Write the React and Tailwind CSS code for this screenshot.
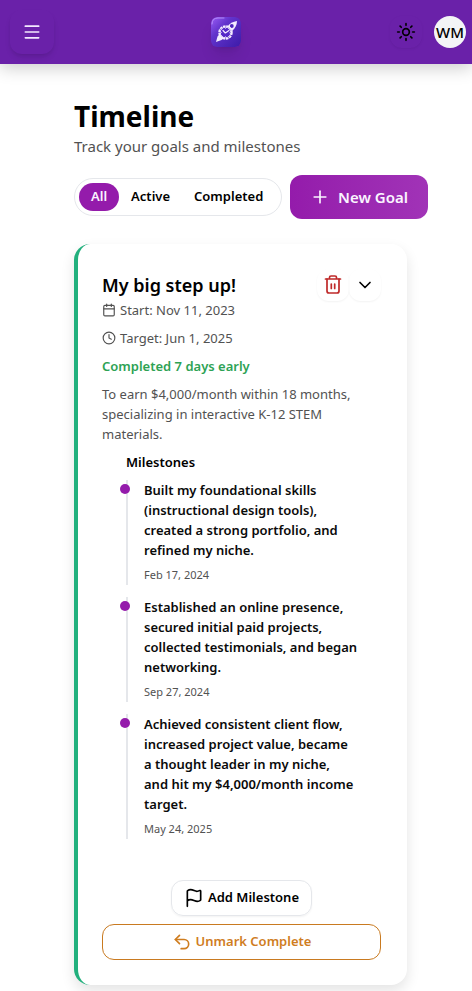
import { useState } from "react";
import { Calendar, ChevronDown, Clock, Flag, Menu, Plus, Sun, Undo2 } from "lucide-react";

const FILTERS = ["All", "Active", "Completed"];

const GOAL = {
  title: "My big step up!",
  start: "Nov 11, 2023",
  target: "Jun 1, 2025",
  status: "Completed 7 days early",
  description: "To earn $4,000/month within 18 months, specializing in interactive K-12 STEM materials.",
  milestones: [
    {
      text: "Built my foundational skills (instructional design tools), created a strong portfolio, and refined my niche.",
      date: "Feb 17, 2024",
    },
    {
      text: "Established an online presence, secured initial paid projects, collected testimonials, and began networking.",
      date: "Sep 27, 2024",
    },
    {
      text: "Achieved consistent client flow, increased project value, became a\u00a0thought leader in my niche, and\u00a0hit my $4,000/month income target.",
      date: "May 24, 2025",
    },
  ],
};

function Logo() {
  return (
    <svg viewBox="0 0 30 30" className="size-[30px] rounded-md shadow-lg" aria-hidden="true">
      <defs>
        <linearGradient id="logo-bg" x1="0" y1="0" x2="1" y2="1">
          <stop offset="0" stopColor="#9a5cf5" />
          <stop offset="0.35" stopColor="#6233cc" />
          <stop offset="1" stopColor="#3c1ba8" />
        </linearGradient>
      </defs>
      <rect width="30" height="30" rx="6" fill="url(#logo-bg)" />
      <path d="M1 7Q1 1 7 1H13" fill="none" stroke="#c9a5ff" strokeWidth="1" strokeLinecap="round" opacity="0.7" />
      <path d="M26 4C22 4.500 18.500 6.500 16.500 9.500L21 14C24 11.500 26 8 26 4Z" fill="#f3ecff" />
      <path d="M9.500 16L6.500 19.500L5 25L10.500 23L14 20.500Z" fill="#f3ecff" />
      <circle cx="20.800" cy="9" r="1.900" fill="#4b24bd" />
      <circle cx="14.500" cy="15.500" r="6.400" fill="none" stroke="#f3ecff" strokeWidth="1.700" strokeDasharray="2.600 0.750" />
      <circle cx="14.500" cy="15.500" r="5.300" fill="#5529c8" stroke="#f3ecff" strokeWidth="1" />
      <path d="M12 13.500L14.300 16L18 13.500" fill="none" stroke="#f3ecff" strokeWidth="1.200" strokeLinecap="round" strokeLinejoin="round" />
      <path d="M14.500 11.300V12M14.500 19V19.700M10.300 15.500H11M18 15.800H18.700" stroke="#f3ecff" strokeWidth="0.800" />
    </svg>
  );
}

function TrashIcon() {
  return (
    <svg viewBox="0 0 20 20" className="size-5" fill="none" stroke="currentColor" strokeWidth="1.7"
      strokeLinecap="round" strokeLinejoin="round" aria-hidden="true">
      <path d="M2.500 4H17.500M6.500 4V2.500Q6.500 1 8 1H12Q13.500 1 13.500 2.500V4" />
      <path d="M4 4V16Q4 18 6 18H14Q16 18 16 16V4M8.300 9V13.500M11.700 9V13.500" />
    </svg>
  );
}

function Header() {
  return (
    <header className="flex h-16 items-center justify-between bg-[#6a21a9] pl-2.5 pr-1.5 shadow-[0_4px_16px_rgba(0,0,0,0.2)]">
      <button aria-label="Open menu"
        className="flex size-11 items-center justify-center rounded-xl text-purple-100 shadow-md shadow-black/10">
        <Menu size={20} />
      </button>
      <a href="#home" aria-label="Home" className="pl-2">
        <Logo />
      </a>
      <div className="flex items-center gap-3">
        <button aria-label="Toggle theme"
          className="flex size-8 items-center justify-center rounded-xl text-black shadow-sm shadow-black/5">
          <Sun size={20} />
        </button>
        <button aria-label="Account"
          className="flex size-8 items-center justify-center rounded-full bg-gray-100 text-[15px] font-medium text-black">
          WM
        </button>
      </div>
    </header>
  );
}

function Milestone({ text, date }) {
  return (
    <li className="relative border-l-2 border-gray-200 pl-4">
      <span className="absolute -left-2 top-1 size-2.5 rounded-full bg-[#941bab]" />
      <p className="text-[13px] font-semibold leading-5 text-neutral-950">{text}</p>
      <p className="mt-1 text-[11px] leading-[21px] text-neutral-600">{date}</p>
    </li>
  );
}

function GoalCard({ goal }) {
  const [open, setOpen] = useState(true);

  return (
    <article className="mr-[21px] mt-[25px] rounded-2xl border-l-4 border-[#22b07d] bg-white pb-[25px] pl-6 pr-[26px] pt-[27px] shadow-[0_6px_14px_rgba(0,0,0,0.11)]">
      <div className="flex items-center justify-between">
        <h2 className="whitespace-nowrap text-lg font-semibold leading-7 text-black">{goal.title}</h2>
        <div className="flex h-7 items-center">
          <button aria-label="Delete goal"
            className="flex size-8 items-center justify-center rounded-xl text-[#bf2a2a] shadow-[0_1px_2px_rgba(0,0,0,0.05)]">
            <TrashIcon />
          </button>
          <button aria-label="Toggle details" aria-expanded={open} onClick={() => setOpen(!open)}
            className="flex size-8 items-center justify-center rounded-xl text-black shadow-[0_1px_2px_rgba(0,0,0,0.05)]">
            <ChevronDown size={20} />
          </button>
        </div>
      </div>

      <div className="mt-px flex flex-col gap-2 text-[13px] leading-5 text-neutral-600">
        <p className="flex items-center gap-1"><Calendar size={14} />Start: {goal.start}</p>
        <p className="flex items-center gap-1"><Clock size={14} />Target: {goal.target}</p>
        <p className="font-semibold text-[#2da254]">{goal.status}</p>
        <p>{goal.description}</p>
      </div>

      {open && (
        <section className="mt-2 pl-6 pr-5">
          <h3 className="text-[13px] font-semibold leading-5 text-black">Milestones</h3>
          <ul className="mt-2 flex flex-col gap-3">
            {goal.milestones.map((m) => (
              <Milestone key={m.date} text={m.text} date={m.date} />
            ))}
          </ul>
        </section>
      )}

      <div className="mt-[41px] flex flex-col items-center gap-2">
        <button className="flex h-9 items-center gap-1 rounded-xl border border-gray-200 px-3 text-[13px] font-semibold text-black shadow-xs">
          <Flag size={20} />
          Add Milestone
        </button>
        <button className="flex h-9 w-full items-center justify-center gap-1 rounded-xl border border-[#c97a20] text-[13px] font-semibold text-[#cf7d1f]">
          <Undo2 size={20} />
          Unmark Complete
        </button>
      </div>
    </article>
  );
}

export default function App() {
  const [filter, setFilter] = useState("All");

  return (
    <div className="bg-white font-['Noto_Sans','Open_Sans',sans-serif]">
      <Header />
      <main className="pb-1.5 pl-[74px] pr-11 pt-[34px]">
        <h1 className="text-[28px] font-bold leading-9 text-black">Timeline</h1>
        <p className="text-[15px] leading-6 text-neutral-600">Track your goals and milestones</p>

        <div className="mt-[17px] flex items-center justify-between gap-2">
          <div className="flex h-[38px] grow items-center rounded-full border border-gray-200 px-1">
            {FILTERS.map((f) => (
              <button key={f} onClick={() => setFilter(f)}
                className={`h-7 rounded-full px-3 text-[13px] font-semibold ${
                  filter === f ? "bg-[#941bab] text-purple-50" : "text-black"
                }`}>
                {f}
              </button>
            ))}
          </div>
          <button className="flex h-11 items-center gap-2 whitespace-nowrap rounded-xl bg-linear-to-r from-[#941bab] to-[#a133b7] px-5 text-[15px] font-semibold text-purple-50">
            <Plus size={20} />
            New Goal
          </button>
        </div>

        <GoalCard goal={GOAL} />
      </main>
    </div>
  );
}
